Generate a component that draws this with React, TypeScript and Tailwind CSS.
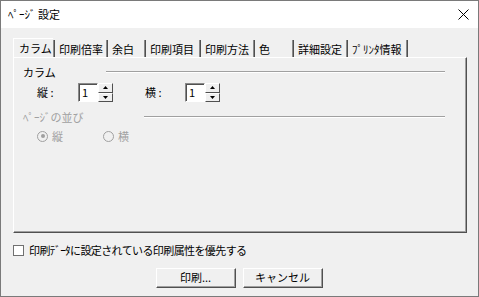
import React from 'react';

const FONT = '"Noto Sans CJK JP", "Liberation Sans", sans-serif';

type TabDef = { label: string; width: number };

const TABS: TabDef[] = [
  { label: '印刷倍率', width: 53 },
  { label: '余白', width: 38 },
  { label: '印刷項目', width: 55 },
  { label: '印刷方法', width: 54 },
  { label: '色', width: 39 },
  { label: '詳細設定', width: 54 },
  { label: 'ﾌﾟﾘﾝﾀ情報', width: 60 },
];

// etched separator between flat tabs
const Sep = () => (
  <div className="flex h-[17px] self-end">
    <span className="w-px bg-[#8a8a8a]" />
    <span className="w-px bg-[#505050]" />
  </div>
);

const EtchedLine = () => (
  <div className="flex flex-1 flex-col">
    <span className="h-px bg-[#a0a0a0]" />
    <span className="h-px bg-white" />
  </div>
);

const SpinBox = ({ value }: { value: string }) => (
  <div className="flex h-[19px]">
    <div className="w-[20px] h-full border-t border-l border-[#8a8a8a] border-b border-r border-b-white border-r-white">
      <div className="w-full h-full border-t border-l border-[#505050] bg-white pl-[2px] text-[11px] leading-[15px] text-black">
        {value}
      </div>
    </div>
    <div className="flex w-[15px] h-full flex-col">
      {[0, 1].map(i => (
        <div
          key={i}
          className="flex flex-1 items-center justify-center border-t border-l border-white border-b border-r border-b-[#505050] border-r-[#505050] bg-[#f0f0f0]"
        >
          <svg width="5" height="3" viewBox="0 0 5 3">
            {i === 0 ? <polygon points="2.5,0 5,3 0,3" fill="#000" /> : <polygon points="0,0 5,0 2.5,3" fill="#000" />}
          </svg>
        </div>
      ))}
    </div>
  </div>
);

const Radio = ({ checked }: { checked: boolean }) => (
  <div className="relative w-[11px] h-[11px] rounded-full border border-[#a0a0a0] bg-[#f0f0f0] flex items-center justify-center">
    {checked && <span className="w-[4px] h-[4px] rounded-full bg-[#a0a0a0]" />}
  </div>
);

const Button = ({ label }: { label: string }) => (
  <div className="w-[80px] h-[20px] border-t border-l border-white border-b border-r border-b-[#505050] border-r-[#505050]">
    <div className="w-full h-full border-b border-r border-[#a0a0a0] flex items-center justify-center text-[11px] text-black">
      {label}
    </div>
  </div>
);

export default function App() {
  return (
    <div
      className="w-[479px] h-[297px] bg-[#f0f0f0] border border-[#7a7a7a] flex flex-col overflow-hidden text-black"
      style={{ fontFamily: FONT }}
    >
      {/* Title bar */}
      <div className="h-[27px] bg-white flex items-center justify-between pl-[7px] pr-[9px]">
        <span className="text-[11px] leading-none">ﾍﾟｰｼﾞ 設定</span>
        <svg width="11" height="11" viewBox="0 0 11 11">
          <path d="M0.5 0.5 L10.5 10.5 M10.5 0.5 L0.5 10.5" stroke="#000" strokeWidth="1" />
        </svg>
      </div>

      <div className="flex flex-col pl-[12px] pt-[10px]">
        {/* Tabs */}
        <div className="flex h-[19px] items-stretch">
          <div className="w-[40px] border-t border-l border-white flex items-center pl-[5px] text-[11px]">カラム</div>
          <Sep />
          {TABS.map(t => (
            <React.Fragment key={t.label}>
              <div className="flex items-end pb-[1px] pl-[4px] text-[11px] leading-[14px]" style={{ width: t.width - 2 }}>
                {t.label}
              </div>
              <Sep />
            </React.Fragment>
          ))}
        </div>

        {/* Panel */}
        <div className="w-[454px] h-[176px] border-t border-l border-white border-b border-r border-b-[#505050] border-r-[#505050]">
          <div className="w-full h-full border-b border-r border-[#a0a0a0] pl-[9px] pr-[20px] pt-[7px] flex flex-col">
            <div className="flex items-center h-[14px]">
              <span className="w-[83px] text-[11px] leading-none">カラム</span>
              <EtchedLine />
            </div>

            <div className="flex items-center mt-[4px] pl-[14px] h-[19px]">
              <span className="w-[41px] text-[11px]">縦 :</span>
              <SpinBox value="1" />
              <span className="ml-[32px] w-[40px] text-[11px]">横 :</span>
              <SpinBox value="1" />
            </div>

            <div className="flex items-center mt-[8px] h-[14px]">
              <span className="w-[121px] text-[11px] leading-none text-[#a0a0a0]">ﾍﾟｰｼﾞの並び</span>
              <EtchedLine />
            </div>

            <div className="flex items-center mt-[6px] pl-[14px] h-[12px] text-[11px] text-[#a0a0a0]">
              <Radio checked />
              <span className="ml-[4px] w-[51px]">縦</span>
              <Radio checked={false} />
              <span className="ml-[4px]">横</span>
            </div>
          </div>
        </div>

        {/* Checkbox */}
        <div className="flex items-center mt-[11px] h-[12px]">
          <div className="w-[11px] h-[11px] border border-[#707070] bg-white" />
          <span className="ml-[5px] text-[11px] leading-none tracking-[-0.6px]">印刷ﾃﾞｰﾀに設定されている印刷属性を優先する</span>
        </div>

        {/* Buttons */}
        <div className="flex mt-[12px] pl-[143px] gap-[7px]">
          <Button label="印刷..." />
          <Button label="キャンセル" />
        </div>
      </div>
    </div>
  );
}
